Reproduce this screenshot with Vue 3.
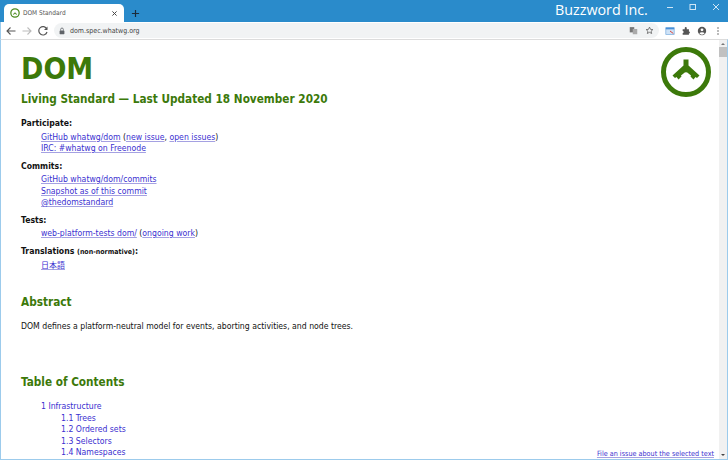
<script setup>
const sections = [
  { title: 'Participate:', rows: [[['a','GitHub whatwg/dom'],['t',' ('],['a','new issue'],['t',', '],['a','open issues'],['t',')']], [['a','IRC: #whatwg on Freenode']]] },
  { title: 'Commits:', rows: [[['a','GitHub whatwg/dom/commits']], [['a','Snapshot as of this commit']], [['a','@thedomstandard']]] },
  { title: 'Tests:', rows: [[['a','web-platform-tests dom/'],['t',' ('],['a','ongoing work'],['t',')']]] },
]
const toc = ['1.1 Trees', '1.2 Ordered sets', '1.3 Selectors', '1.4 Namespaces']
</script>

<template>
  <div class="window">
    <header class="titlebar">
      <div class="tab">
        <svg class="favicon" viewBox="0 0 24 24"><circle cx="12" cy="12" r="10" fill="#fff" stroke="#4a8a1c" stroke-width="3"/><path d="M12 6v4l-5 5 2 1 3-3 3 3 2-1-5-5z" fill="#4a8a1c"/></svg>
        <span class="tab-title">DOM Standard</span>
        <svg class="tab-x" viewBox="0 0 10 10"><path d="M2 2l6 6M8 2l-6 6" stroke="#444" stroke-width="1.4"/></svg>
      </div>
      <svg class="plus" viewBox="0 0 10 10"><path d="M5 1v8M1 5h8" stroke="#1c2b3a" stroke-width="1.3"/></svg>
      <div class="brand">Buzzword Inc.</div>
      <div class="winctl">
        <svg viewBox="0 0 10 10"><path d="M2 5.500h6" stroke="#cfe6f6"/></svg>
        <svg viewBox="0 0 10 10"><rect x="2" y="2.500" width="5.500" height="5" fill="none" stroke="#cfe6f6"/></svg>
        <svg viewBox="0 0 10 10"><path d="M2 2l6 6M8 2l-6 6" stroke="#cfe6f6"/></svg>
      </div>
    </header>
    <nav class="toolbar">
      <svg class="nav" viewBox="0 0 12 12"><path d="M10.500 6H2M5.500 2.500L2 6l3.500 3.500" fill="none" stroke="#555" stroke-width="1.100"/></svg>
      <svg class="nav" viewBox="0 0 12 12"><path d="M1.500 6H10M6.500 2.500L10 6l-3.500 3.500" fill="none" stroke="#bbb" stroke-width="1.100"/></svg>
      <svg class="nav" viewBox="0 0 12 12"><path d="M9.800 4A4.200 4.200 0 1 0 10 7" fill="none" stroke="#555" stroke-width="1.200"/><path d="M10.500 1.500v3.500H7z" fill="#555"/></svg>
      <div class="omnibox">
        <svg class="lock" viewBox="0 0 10 10"><rect x="2" y="4.500" width="6" height="4.500" rx=".6" fill="#5f6368"/><path d="M3.300 4.500V3a1.700 1.700 0 0 1 3.400 0v1.500" fill="none" stroke="#5f6368"/></svg>
        <span class="url">dom.spec.whatwg.org</span>
        <svg class="omni-ico" viewBox="0 0 12 12"><rect x="1" y="1.500" width="6" height="7" fill="#777"/><rect x="5" y="4" width="6" height="7" fill="#aaa"/></svg>
        <svg class="omni-ico star" viewBox="0 0 12 12"><path d="M6 1.500l1.400 3 3.100.3-2.400 2.100.8 3.100L6 8.400 3.100 10l.8-3.100L1.500 4.800l3.100-.3z" fill="none" stroke="#555"/></svg>
      </div>
      <svg class="tool-ico first" viewBox="0 0 12 12"><rect x="1" y="2" width="10" height="8" fill="#cfe3f7" stroke="#6ea6dc" stroke-width=".8"/><rect x="1" y="2" width="10" height="2" fill="#4a90d9"/><path d="M6 6l4 3" stroke="#e0453a" stroke-width="1.200"/></svg>
      <svg class="tool-ico" viewBox="0 0 12 12"><path d="M2 4h2.500V2.500a1.200 1.200 0 0 1 2.400 0V4H9.500v2.500a1.200 1.200 0 0 1 0 2.400V10.500H2V8.500a1.200 1.200 0 0 0 0-2.400z" fill="#555"/></svg>
      <svg class="tool-ico" viewBox="0 0 12 12"><circle cx="6" cy="6" r="5" fill="#555"/><circle cx="6" cy="4.600" r="1.700" fill="#fff"/><path d="M2.800 8.800a3.800 3 0 0 1 6.400 0 4 4 0 0 1-6.400 0z" fill="#fff"/></svg>
      <svg class="tool-ico" viewBox="0 0 12 12"><circle cx="6" cy="2.500" r=".9" fill="#555"/><circle cx="6" cy="6" r=".9" fill="#555"/><circle cx="6" cy="9.500" r=".9" fill="#555"/></svg>
    </nav>
    <div class="viewport">
      <main class="page">
        <svg class="logo" viewBox="0 0 50 50">
          <circle cx="25" cy="25" r="22.500" fill="#fff" stroke="#3c790a" stroke-width="5"/>
          <path d="M22.500 12.500H27.500V18.500L38.500 28.500L36 31L34.500 30L32.500 32.500L29.500 29.500L30 28.500L27.500 26.500Q25 24 22.500 26.500L20 28.500L20.500 29.500L17.500 32.500L15.500 30L14 31L11.500 28.500L22.500 18.500Z" fill="#3c790a"/>
        </svg>
        <h1>DOM</h1>
        <h2>Living Standard — Last Updated 18 November 2020</h2>
        <dl>
          <template v-for="s in sections" :key="s.title">
            <dt>{{ s.title }}</dt>
            <dd v-for="(row, i) in s.rows" :key="i">
              <template v-for="(part, j) in row" :key="j">
                <a v-if="part[0] === 'a'">{{ part[1] }}</a>
                <template v-else>{{ part[1] }}</template>
              </template>
            </dd>
          </template>
          <dt>Translations <small>(non-normative)</small>:</dt>
          <dd><a class="ja" lang="ja">日本語</a></dd>
        </dl>
        <h3 class="abstract">Abstract</h3>
        <p>DOM defines a platform-neutral model for events, aborting activities, and node trees.</p>
        <h3 class="contents">Table of Contents</h3>
        <ul class="toc">
          <li><a class="plain">1 Infrastructure</a></li>
          <li v-for="t in toc" :key="t" class="sub"><a class="plain">{{ t }}</a></li>
        </ul>
      </main>
      <aside class="scrollbar">
        <span class="arrow up"></span>
        <span class="thumb"></span>
        <span class="arrow down"></span>
      </aside>
      <a class="file-issue">File an issue about the selected text</a>
    </div>
  </div>
</template>

<style>
html, body { margin: 0; overflow: hidden; }
</style>

<style scoped>
.window {
  width: 728px; height: 460px; box-sizing: border-box; overflow: hidden;
  display: flex; flex-direction: column;
  background: #2a8bcb;
  font-family: "DejaVu Sans Condensed", "DejaVu Sans", "Noto Sans CJK JP", sans-serif;
  font-stretch: condensed;
}
.titlebar { height: 22px; flex: none; display: flex; align-items: flex-end; position: relative; padding-left: 4px; }
.tab { width: 120px; height: 18px; background: #fff; border-radius: 5px 5px 0 0; display: flex; align-items: center; box-sizing: border-box; padding: 0 6px; }
.favicon { width: 10px; height: 10px; margin-right: 3px; }
.tab-title { font-size: 6.500px; color: #555; flex: 1; white-space: nowrap; }
.tab-x { width: 7px; height: 7px; }
.plus { width: 9px; height: 9px; margin: 0 0 4px 7px; }
.brand { position: absolute; left: 555px; top: 0; font: 500 14.300px/20px "Open Sans", sans-serif; color: #fff; white-space: nowrap; }
.winctl { position: absolute; right: 7px; top: 2px; display: flex; gap: 13px; }
.winctl svg { width: 10px; height: 10px; }
.toolbar { height: 17px; flex: none; background: #fff; display: flex; align-items: center; padding: 0 5px 0 4px; border-left: 1px solid #9ccbec; }
.nav { width: 12px; height: 12px; margin-right: 4px; }
.omnibox { flex: 1; margin-left: 1px; height: 15px; border-radius: 8px; background: #f1f3f4; display: flex; align-items: center; padding: 0 5px 0 4px; }
.lock { width: 8px; height: 8px; margin-right: 4px; }
.url { font-size: 7px; color: #444; flex: 1; }
.omni-ico { width: 9px; height: 9px; margin-left: 7px; }
.tool-ico { width: 10px; height: 10px; margin-left: 6px; }
.tool-ico.first { margin-left: 6px; }
.viewport { flex: 1; min-height: 0; display: flex; position: relative; background: #fff; border: solid #9ccbec; border-width: 1px; border-top-color: #dcdcdc; }
.page { flex: 1; min-width: 0; box-sizing: border-box; padding: 0 0 0 20px; font-size: 8.650px; line-height: 11.500px; color: #111; position: relative; overflow: hidden; }
.logo { position: absolute; right: 8px; top: 7px; width: 50px; height: 50px; }
h1 { margin: 11px 0 0; font-size: 30px; line-height: 35px; font-weight: 700; color: #3c790a; }
h2 { margin: 6px 0 0; font-size: 11.700px; line-height: 15px; font-weight: 700; color: #3c790a; }
dl { margin: 11px 0 0; }
dt { font-weight: 700; margin: 6px 0 2px; color: #111; }
dd { margin: 0 0 0 20px; }
small { font-size: 7px; }
a { color: #3a2fd0; text-decoration: underline; text-decoration-color: #a5a1e2; }
a.plain { text-decoration: none; }
a.ja { font-size: 8px; }
.abstract, .contents { font-size: 11.700px; line-height: 15px; font-weight: 700; color: #3c790a; margin: 0; }
.abstract { margin-top: 23px; }
p { margin: 11px 0 0; }
.contents { margin-top: 43px; }
.toc { list-style: none; margin: 11px 0 0; padding: 0 0 0 20px; }
.sub { padding-left: 20px; }
.scrollbar { width: 8px; flex: none; background: #f1f1f1; display: flex; flex-direction: column; align-items: center; position: relative; }
.thumb { width: 8px; height: 10px; background: #c1c1c1; margin-top: 2px; }
.arrow { width: 0; height: 0; border: 2px solid transparent; }
.up { border-bottom-color: #777; margin-top: 1px; }
.down { border-top-color: #444; margin-top: auto; margin-bottom: 1px; }
.file-issue { position: absolute; right: 13px; bottom: 1.500px; font-size: 7.200px; line-height: 9px; color: #3a2fd0; text-decoration: underline; text-decoration-color: #a5a1e2; }
</style>
